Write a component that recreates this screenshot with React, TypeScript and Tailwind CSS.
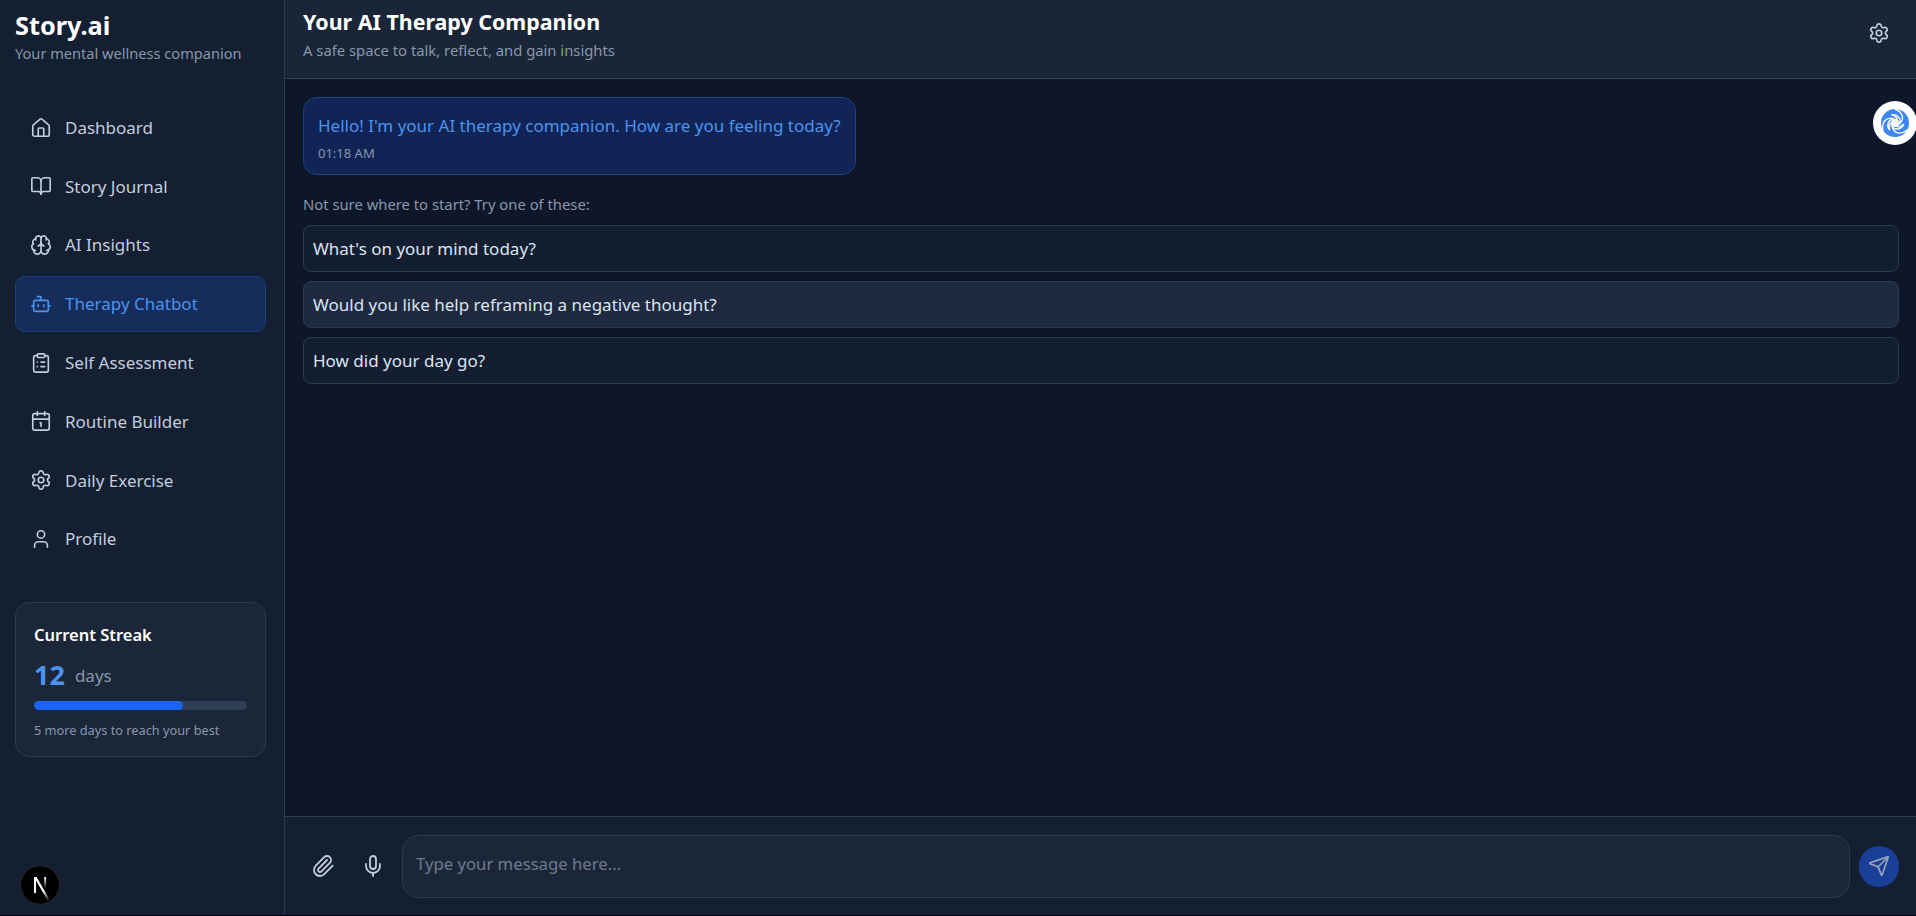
import { House, BookOpen, Brain, Bot, ClipboardList, Calendar1, Settings, User, Paperclip, Mic, Send } from "lucide-react";

const nav = [
  { label: "Dashboard", Icon: House },
  { label: "Story Journal", Icon: BookOpen },
  { label: "AI Insights", Icon: Brain },
  { label: "Therapy Chatbot", Icon: Bot, active: true },
  { label: "Self Assessment", Icon: ClipboardList },
  { label: "Routine Builder", Icon: Calendar1 },
  { label: "Daily Exercise", Icon: Settings },
  { label: "Profile", Icon: User },
];

const prompts = [
  { text: "What's on your mind today?", bg: "bg-[#141e31]" },
  { text: "Would you like help reframing a negative thought?", bg: "bg-[#1f2a40]" },
  { text: "How did your day go?", bg: "bg-[#141e31]" },
];

function Swirl() {
  return (
    <svg viewBox="0 0 32 32" className="h-[32px] w-[32px]">
      <circle cx="16" cy="16" r="14" fill="#3b86f2" />
      {[0, 120, 240].map((r) => (
        <path key={r} d="M16 2C24 5 25.500 12 20.800 16.500C22 11 18 7 12.500 7.800C17 8.800 19.500 12.500 17.500 15" fill="none" stroke="#ffffff" strokeWidth="1.400" strokeLinecap="round" transform={`rotate(${r} 16 16)`} />
      ))}
      <circle cx="16" cy="16" r="4" fill="#ffffff" />
    </svg>
  );
}

function NextLogo() {
  return (
    <svg viewBox="0 0 180 180" className="h-[40px] w-[40px]">
      <defs>
        <linearGradient id="n1" x1="109" y1="116.500" x2="144.500" y2="160.500" gradientUnits="userSpaceOnUse">
          <stop stopColor="#ffffff" />
          <stop offset="1" stopColor="#ffffff" stopOpacity="0" />
        </linearGradient>
        <linearGradient id="n2" x1="121" y1="54" x2="120.800" y2="106.900" gradientUnits="userSpaceOnUse">
          <stop stopColor="#ffffff" />
          <stop offset="1" stopColor="#ffffff" stopOpacity="0" />
        </linearGradient>
      </defs>
      <circle cx="90" cy="90" r="87" fill="#000000" stroke="#2a2a2a" strokeWidth="4" />
      <g transform="translate(22.500 0) scale(0.75 1)">
        <path d="M149.508 157.52L69.142 54H54V125.97H66.1136V69.3836L139.999 164.845C143.333 162.614 146.509 160.165 149.508 157.52Z" fill="url(#n1)" />
        <rect x="115" y="54" width="12" height="72" fill="url(#n2)" />
      </g>
    </svg>
  );
}

export default function App() {
  return (
    <div className="relative flex h-[916px] w-[1916px] overflow-hidden border-b border-black bg-[#0e1629] text-white font-['Noto_Sans','Open_Sans',sans-serif]">
      <aside className="flex h-full w-[285px] shrink-0 flex-col border-r border-[#2b3a50] bg-[#141f32] pl-[15px] pr-[18px]">
        <div className="pt-[8px]">
          <h1 className="text-[25.300px] font-bold leading-[34px]">Story.ai</h1>
          <p className="mt-[1px] text-[14.600px] leading-[20px] text-[#8996ab]">Your mental wellness companion</p>
        </div>
        <nav className="mt-[37px] flex flex-col gap-[2.800px]">
          {nav.map(({ label, Icon, active }) => (
            <div
              key={label}
              className={`flex h-[56px] items-center gap-[13px] rounded-[10px] border px-[14px] pb-[1px] text-[17px] ${
                active ? "border-[#1e3f80] bg-[#162c5b] text-[#4a94ef]" : "border-transparent text-[#c3cddc]"
              }`}
            >
              <Icon size={22} strokeWidth={1.8} />
              <span>{label}</span>
            </div>
          ))}
        </nav>
        <div className="mt-[34px] rounded-[14px] border border-[#2b3a50] bg-[#1b2739] px-[18px] pb-[17px] pt-[20px]">
          <div className="text-[16.500px] font-semibold leading-[24px]">Current Streak</div>
          <div className="mt-[11px] flex items-baseline gap-[10px]">
            <span className="text-[27px] font-bold leading-[34px] text-[#4a94ef]">12</span>
            <span className="relative -top-[3px] text-[17px] text-[#8996ab]">days</span>
          </div>
          <div className="mt-[9px] h-[9px] overflow-hidden rounded-full bg-[#2f3f58]">
            <div className="h-full w-[70%] rounded-full bg-[#1a63f5]" />
          </div>
          <p className="mt-[11px] text-[12.750px] leading-[18px] text-[#8996ab]">5 more days to reach your best</p>
        </div>
        <div className="mt-auto mb-[10px] ml-[5px]">
          <NextLogo />
        </div>
      </aside>

      <main className="flex min-w-0 flex-1 flex-col">
        <header className="flex h-[79px] shrink-0 items-start justify-between border-b border-[#2f3e54] bg-[#1a2638] pl-[18px] pr-[26px]">
          <div className="pt-[8px]">
            <h2 className="text-[21.400px] font-bold leading-[28px]">Your AI Therapy Companion</h2>
            <p className="mt-[4px] text-[14.800px] leading-[20px] text-[#8996ab]">A safe space to talk, reflect, and gain insights</p>
          </div>
          <Settings size={22} strokeWidth={1.8} className="mt-[22px] text-[#c3cddc]" />
        </header>

        <section className="flex-1 pl-[18px] pr-[17px] pt-[18px]">
          <div className="w-fit rounded-[14px] border border-[#1e3f80] bg-[#112455] px-[14px] pb-[12px] pt-[15px]">
            <p className="text-[17px] leading-[26px] text-[#4a94ef]">Hello! I'm your AI therapy companion. How are you feeling today?</p>
            <p className="mt-[5px] text-[13px] leading-[18px] text-[#8996ab]">01:18 AM</p>
          </div>
          <p className="mt-[19px] text-[14.800px] leading-[20px] text-[#8996ab]">Not sure where to start? Try one of these:</p>
          <div className="mt-[11px] flex flex-col gap-[9px]">
            {prompts.map((p) => (
              <div key={p.text} className={`flex h-[47px] items-center rounded-[8px] border border-[#2b3a50] px-[9px] text-[17px] text-[#dbe4f0] ${p.bg}`}>
                {p.text}
              </div>
            ))}
          </div>
        </section>

        <footer className="flex h-[99px] shrink-0 items-center border-t border-[#2f3e54] bg-[#141f32] pl-[18px] pr-[17px]">
          <div className="flex w-[40px] justify-center">
            <Paperclip size={24} strokeWidth={1.8} className="text-[#c3cddc]" />
          </div>
          <div className="ml-[10px] flex w-[40px] justify-center">
            <Mic size={24} strokeWidth={1.8} className="text-[#c3cddc]" />
          </div>
          <div className="ml-[9px] flex h-[63px] flex-1 items-center rounded-[16px] border border-[#2b3a50] bg-[#1b2739] px-[13px] pb-[4px] text-[16.700px] text-[#6d7a8e]">
            Type your message here...
          </div>
          <div className="ml-[9px] flex h-[41px] w-[40px] items-center justify-center rounded-full bg-[#1a3f98]">
            <Send size={22} strokeWidth={1.8} className="text-[#9aa5b8]" />
          </div>
        </footer>
      </main>

      <div className="absolute left-[1873px] top-[101px] flex h-[44px] w-[44px] items-center justify-center rounded-full bg-white">
        <Swirl />
      </div>
    </div>
  );
}
